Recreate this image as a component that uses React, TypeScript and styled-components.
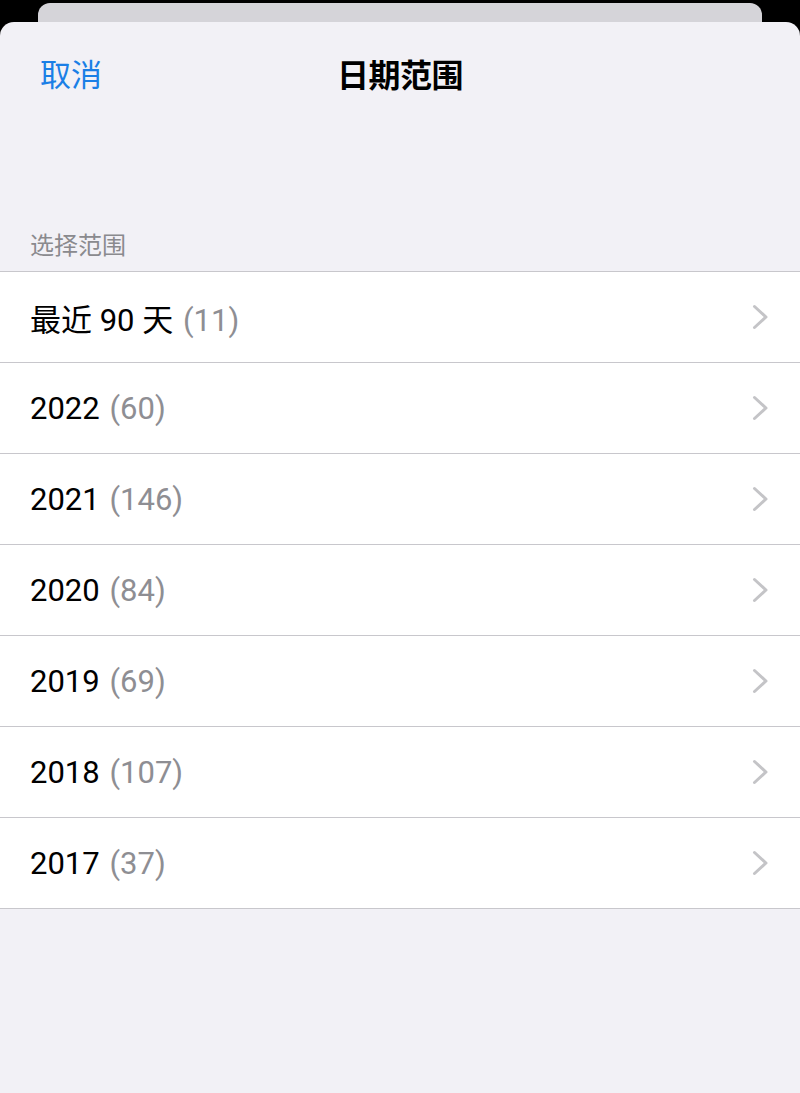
import React from "react";
import styled, { createGlobalStyle } from "styled-components";

const Global = createGlobalStyle`
  html, body { margin: 0; padding: 0; background: #000; }
  body { font-family: Roboto, "Noto Sans CJK SC", sans-serif; -webkit-font-smoothing: antialiased; }
`;

const Screen = styled.div`
  width: 800px;
  height: 1093px;
  overflow: hidden;
  background: #000;
  display: flex;
  flex-direction: column;
`;

const BackCard = styled.div`
  margin: 3px 38px 0;
  height: 19px;
  flex-shrink: 0;
  background: #d5d4d9;
  border-radius: 12px 12px 0 0;
`;

const Sheet = styled.div`
  flex: 1;
  background: #f2f1f6;
  border-radius: 14px 14px 0 0;
  display: flex;
  flex-direction: column;
`;

const NavBar = styled.div`
  height: 108px;
  box-sizing: border-box;
  display: grid;
  grid-template-columns: 1fr auto 1fr;
  align-items: center;
  padding: 0 40px 7px;
`;

const Cancel = styled.span`
  font-family: "Noto Sans CJK SC", sans-serif;
  font-size: 31px;
  color: #1b7fe6;
  justify-self: start;
`;

const Title = styled.span`
  font-family: "Noto Sans CJK SC", sans-serif;
  font-size: 32px;
  font-weight: 700;
  color: #000;
  letter-spacing: -0.5px;
`;

const SectionHeader = styled.div`
  height: 141px;
  box-sizing: border-box;
  display: flex;
  align-items: flex-end;
  padding: 0 30px 12px;
  font-family: "Noto Sans CJK SC", sans-serif;
  font-size: 24px;
  line-height: 30px;
  color: #8a8a8e;
`;

const List = styled.div`
  background: #fff;
  border-top: 1px solid #c8c7cc;
`;

const Row = styled.div`
  height: 91px;
  box-sizing: border-box;
  border-bottom: 1px solid #c8c7cc;
  display: flex;
  align-items: center;
  justify-content: space-between;
  padding: 0 31px 0 30px;
`;

const Label = styled.span`
  font-family: Roboto, "Noto Sans CJK SC", sans-serif;
  font-size: 31px;
  color: #000;
  white-space: pre;
`;

const Count = styled.span`
  color: #8e8e93;
  margin-left: 2px;
`;

const Chevron = () => (
  <svg width="17" height="26" viewBox="0 0 17 26" fill="none">
    <path d="M2.5 2.5 L14 13 L2.5 23.5" stroke="#c4c4c7" strokeWidth="3" strokeLinecap="round" strokeLinejoin="round" />
  </svg>
);

const rows: { label: string; count: number }[] = [
  { label: "最近 90 天", count: 11 },
  { label: "2022", count: 60 },
  { label: "2021", count: 146 },
  { label: "2020", count: 84 },
  { label: "2019", count: 69 },
  { label: "2018", count: 107 },
  { label: "2017", count: 37 },
];

export default function App() {
  return (
    <>
      <Global />
      <Screen>
        <BackCard />
        <Sheet>
          <NavBar>
            <Cancel>取消</Cancel>
            <Title>日期范围</Title>
            <span />
          </NavBar>
          <SectionHeader>选择范围</SectionHeader>
          <List>
            {rows.map((r) => (
              <Row key={r.label}>
                <Label>
                  {r.label} <Count>({r.count})</Count>
                </Label>
                <Chevron />
              </Row>
            ))}
          </List>
        </Sheet>
      </Screen>
    </>
  );
}
